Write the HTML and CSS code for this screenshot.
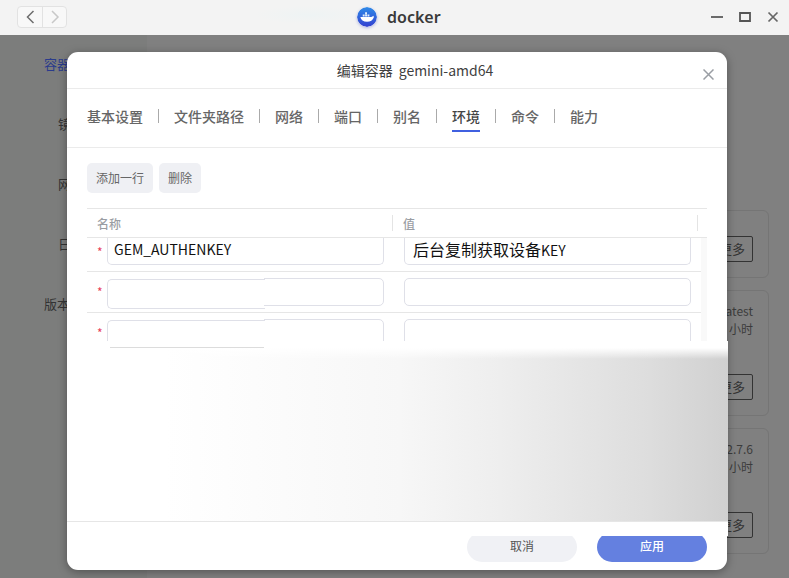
FILE: index.html
```html
<!DOCTYPE html>
<html lang="zh">
<head>
<meta charset="utf-8">
<title>docker</title>
<link rel="stylesheet" href="styles.css">
</head>
<body>
<div class="app">
  <header class="titlebar">
    <div class="nav-group">
      <button class="nav-btn"><svg width="10" height="14" viewBox="0 0 10 14"><path d="M8.500 1 2.500 7l6 6" fill="none" stroke="#6d6d6d" stroke-width="1.500"/></svg></button>
      <button class="nav-btn"><svg width="10" height="14" viewBox="0 0 10 14"><path d="M2 1l6 6-6 6" fill="none" stroke="#c8c8c8" stroke-width="1.500"/></svg></button>
    </div>
    <div class="brand">
      <svg class="logo" width="20" height="20" viewBox="0 0 21 21">
        <defs><linearGradient id="lg" x1="0" y1="0" x2="0" y2="1"><stop offset="0" stop-color="#2f8be8"/><stop offset="1" stop-color="#3340d0"/></linearGradient></defs>
        <circle cx="10.500" cy="10.500" r="10.500" fill="url(#lg)"/>
        <path d="M3.500 10.500h11.500c.8 0 1.500-.6 2-1.200.6.500.8 1.200.6 1.800-1 3-3.500 4.400-7 4.400-4 0-6.500-1.800-7.100-5z" fill="#fff"/>
        <path d="M6 8h2v2H6zM8.500 8h2v2h-2zM11 8h2v2h-2zM8.500 5.500h2v2h-2z" fill="#e3f0fb"/>
      </svg>
      <span class="brand-name">docker</span>
    </div>
    <div class="win-controls">
      <svg width="14" height="14" viewBox="0 0 14 14"><path d="M1 7h12" stroke="#6a6a6a" stroke-width="2"/></svg>
      <svg width="14" height="14" viewBox="0 0 14 14"><path d="M2 3h10v8H2z" fill="none" stroke="#555" stroke-width="1.800"/></svg>
      <svg width="14" height="14" viewBox="0 0 14 14"><path d="M2.500 2.500l9 9M11.500 2.500l-9 9" stroke="#666" stroke-width="1.700"/></svg>
    </div>
  </header>

  <div class="backdrop">
    <nav class="side">
      <a class="side-item active">容器</a>
      <a class="side-item indent">镜像</a>
      <a class="side-item indent">网络</a>
      <a class="side-item indent">日志</a>
      <a class="side-item">版本</a>
    </nav>
    <main class="cards">
      <section class="card card-a"><div class="card-btn-row"><span class="more">更多</span></div></section>
      <section class="card card-b">
        <p class="card-line">latest</p>
        <p class="card-line">小时</p>
        <div class="card-btn-row"><span class="more">更多</span></div>
      </section>
      <section class="card card-c">
        <p class="card-line">2.7.6</p>
        <p class="card-line">小时</p>
        <div class="card-btn-row"><span class="more">更多</span></div>
      </section>
    </main>
  </div>

  <div class="modal">
    <div class="modal-head">
      <span class="modal-title">编辑容器<span class="modal-name">gemini-amd64</span></span>
      <svg class="modal-close" width="11" height="11" viewBox="0 0 11 11"><path d="M.5.500l10 10M10.500.500l-10 10" stroke="#9a9ea4" stroke-width="1.500"/></svg>
    </div>
    <div class="tabs">
      <span class="tab">基本设置</span>
      <span class="tab">文件夹路径</span>
      <span class="tab">网络</span>
      <span class="tab">端口</span>
      <span class="tab">别名</span>
      <span class="tab active">环境</span>
      <span class="tab">命令</span>
      <span class="tab">能力</span>
    </div>
    <div class="modal-body">
      <div class="actions">
        <button class="act-btn">添加一行</button>
        <button class="act-btn">删除</button>
      </div>
      <div class="table">
        <div class="t-head">
          <div class="th th-name">名称</div>
          <div class="th th-val">值</div>
        </div>
        <div class="t-rows">
          <div class="row row-first">
            <span class="req">*</span>
            <div class="field">GEM_AUTHENKEY</div>
            <div class="field field-val"><span class="cjk-val">后台复制获取设备</span>KEY</div>
          </div>
          <div class="row">
            <span class="req">*</span>
            <div class="field field-split"></div>
            <div class="field"></div>
          </div>
          <div class="row">
            <span class="req">*</span>
            <div class="field field-split"></div>
            <div class="field"></div>
          </div>
        </div>
      </div>
    </div>
    <div class="smear"></div>
    <div class="modal-foot">
      <button class="pill pill-cancel">取消</button>
      <button class="pill pill-apply">应用</button>
    </div>
  </div>
</div>
</body>
</html>
```
FILE: styles.css
```css
* { box-sizing: border-box; }
html, body { margin: 0; padding: 0; }
body { font-family: "Noto Sans CJK SC", "Noto Sans", sans-serif; overflow: hidden; }
.app { position: relative; width: 789px; height: 578px; overflow: hidden; background: #808080; }
.titlebar { height: 35px; background: radial-gradient(ellipse 55px 9px at 310px 15px, #eef3f4, rgba(243,243,243,0)), #f3f3f3; display: flex; align-items: center; padding: 0 9px 0 17px; position: relative; }
.nav-group { display: flex; border: 1px solid #e2e2e2; border-radius: 4px; background: #f8f8f8; height: 22px; margin-top: -1px; }
.nav-btn { width: 24px; padding: 0; border: 0; background: transparent; display: flex; align-items: center; justify-content: center; }
.nav-btn + .nav-btn { border-left: 1px solid #e2e2e2; }
.brand { display: flex; align-items: center; gap: 10px; margin-left: 290px; margin-top: -2px; }
.logo { box-shadow: 0 1px 3px rgba(50,70,200,.35); border-radius: 50%; }
.brand-name { font-family: "Noto Sans", sans-serif; font-size: 16px; font-weight: 600; color: #3a3a3a; line-height: 20px; }
.win-controls { margin-left: auto; display: flex; gap: 14px; align-items: center; margin-top: -2px; }
.backdrop { display: flex; height: 543px; }
.side { width: 147px; padding: 19px 0 0 44px; display: flex; flex-direction: column; gap: 40px; background: #7c7d7c; }
.side-item { font-size: 13px; line-height: 20px; color: #333; }
.side-item.active { color: #2a3b8c; }
.side-item.indent { margin-left: 14px; }
.cards { flex: 1; padding: 175px 20px 0 0; display: flex; flex-direction: column; align-items: flex-end; gap: 12px; }
.card { width: 100%; border: 1px solid #757575; border-radius: 6px; display: flex; flex-direction: column; align-items: flex-end; padding-right: 15px; }
.card-a { height: 68px; padding-top: 25px; }
.card-b { height: 126px; padding-top: 11px; }
.card-c { height: 126px; padding-top: 11px; }
.card-line { margin: 0; font-size: 12px; line-height: 18px; color: #3c3c3c; }
.card-btn-row { margin-top: auto; margin-bottom: 15px; }
.card-a .card-btn-row { margin-top: 0; }
.more { display: block; width: 50px; height: 26px; border: 1px solid #333; border-radius: 2px; font-size: 13px; line-height: 24px; text-align: right; padding-right: 7px; color: #333; }
.modal { position: absolute; left: 67px; top: 52px; width: 660px; height: 518px; background: #fff; border-radius: 11px; box-shadow: 0 2px 10px rgba(0,0,0,.35); display: flex; flex-direction: column; }
.modal-head { height: 37px; border-bottom: 1px solid #ebebeb; display: flex; align-items: center; justify-content: center; padding-left: 36px; position: relative; flex: none; }
.modal-title { font-size: 14px; line-height: 20px; color: #3f3f3f; margin-top: -1px; }
.modal-name { margin-left: 6px; }
.modal-close { position: absolute; right: 13px; top: 17px; }
.tabs { height: 59px; border-bottom: 1px solid #ebebeb; display: flex; align-items: flex-start; padding: 17px 0 0 20px; flex: none; }
.tab { font-size: 14px; line-height: 20px; height: 26px; color: #666; font-weight: 500; position: relative; margin-right: 31px; }
.tab:not(:last-child)::after { content: ""; position: absolute; right: -16px; top: 3px; width: 1px; height: 14px; background: #aaa; }
.tab.active { color: #444; box-shadow: inset 0 -2px 0 #4060e0; }
.modal-body { padding: 15px 20px 0; flex: none; }
.actions { display: flex; gap: 6px; }
.act-btn { height: 30px; border: 0; border-radius: 5px; background: #eff0f4; padding: 0 9px; font: 12px/20px "Noto Sans CJK SC", sans-serif; color: #666; }
.table { margin-top: 15px; border-top: 1px solid #e6e6e6; }
.t-head { display: grid; grid-template-columns: 306px 305px 9px; height: 29px; border-bottom: 1px solid #e6e6e6; }
.th { font-size: 12px; line-height: 29px; color: #9a9da3; font-weight: 500; padding-left: 10px; position: relative; }
.th::after { content: ""; position: absolute; right: 0; top: 6px; width: 1px; height: 16px; background: #e4e4e4; }
.t-rows { background: #f9f9f9; height: 103px; overflow: hidden; }
.row { background: #fff; display: grid; grid-template-columns: 20px 277px 307px; height: 41px; border-bottom: 1px solid #e6e6e6; align-items: start; padding-top: 6px; margin-right: 6px; }
.row > .field:last-child { margin-left: 20px; }
.row-first { height: 34px; padding-top: 0; }
.row-first .field { border-top: 0; border-radius: 0 0 5px 5px; height: 27px; line-height: 22px; }
.req { font-size: 12px; line-height: 28px; color: #e8405a; padding-left: 10px; }
.field { height: 28px; border: 1px solid #dfe0e8; border-radius: 5px; font-size: 14px; line-height: 24px; padding-left: 6px; color: #111; background: #fff; position: relative; }
.row > .field-val { padding-left: 8px; }
.cjk-val { font-size: 16px; }
.field-split::before { content: ""; position: absolute; left: -1px; top: -1px; width: 157px; height: 29px; background: #fff; }
.field-split::after { content: ""; position: absolute; left: -1px; top: 0; width: 157px; height: 28px; border: 1px solid #dfe0e8; border-right: 0; border-radius: 5px 0 0 5px; }
.smear { position: absolute; left: 0; right: -1px; top: 289px; height: 195px;
  background:
    linear-gradient(#fff 0, #fff 7px, rgba(255,255,255,0) 18px),
    linear-gradient(#fff, #fff) bottom / 100% 14px no-repeat,
    linear-gradient(90deg, #fff 100px, #f7f7f7 333px, #eee 433px, #ddd 583px, #d0d0d0 661px); }
.smear::before { content: ""; position: absolute; left: 0; right: 0; bottom: 14px; height: 1px; background: #e6e6e6; }
.smear::after { content: ""; position: absolute; left: 43px; top: 6px; width: 154px; height: 1px; background: #dcdcdc; }
.modal-foot { position: absolute; left: 0; right: 0; top: 484px; height: 34px; display: flex; justify-content: flex-end; gap: 20px; padding-right: 20px; overflow: hidden; }
.pill { width: 110px; height: 30px; flex: none; margin-top: -4px; border: 0; border-radius: 15px; padding: 0 0 2px; font: 12px/28px "Noto Sans CJK SC", sans-serif; }
.pill-cancel { background: #f0f1f5; color: #555; }
.pill-apply { background: #6480e0; color: #fff; font-weight: 500; }
```
